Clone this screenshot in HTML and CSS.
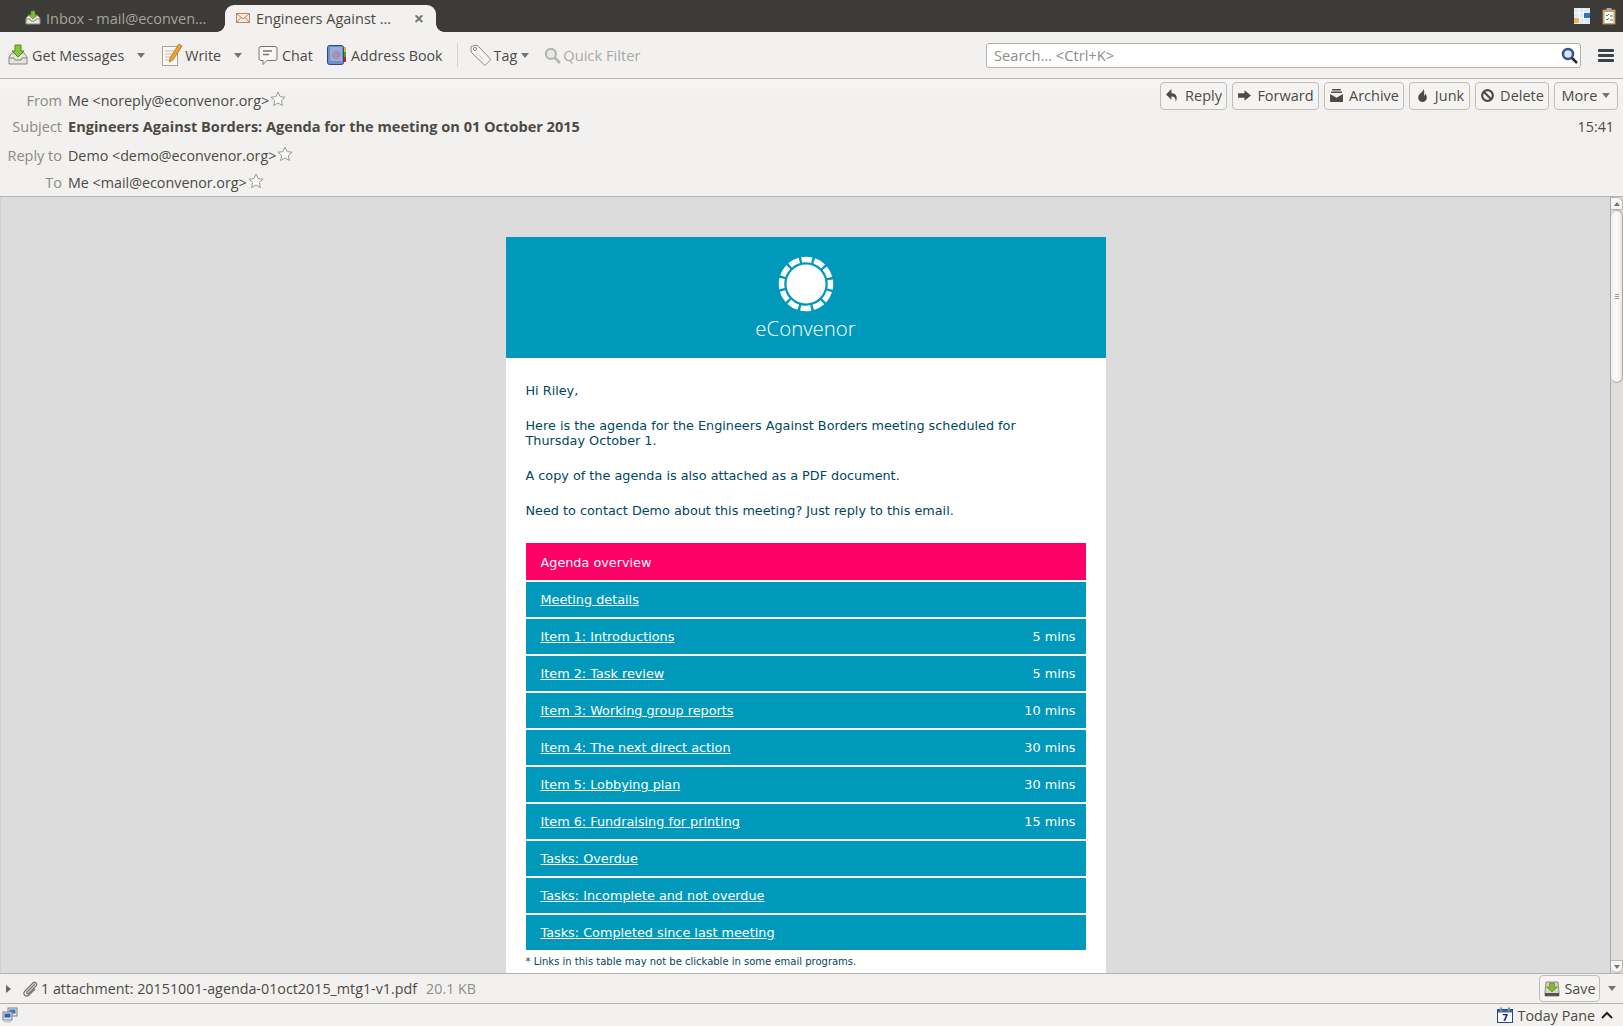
FILE: index.html
```html
<!DOCTYPE html>
<html lang="en">
<head>
    <meta charset="UTF-8">
    <title>Engineers Against Borders</title>
    <link rel="stylesheet" href="styles.css">
</head>
<body>
    <div class="tabbar">
        <div class="tab">
            <svg class="tab-icon" width="16" height="16" viewBox="0 0 16 16"><path d="M1 8l3-3h8l3 3v6H1z" fill="#e8e6df" stroke="#8a8a80"/><path d="M1 9h4l1 2h4l1-2h4" fill="none" stroke="#8a8a80"/><path d="M6 1h4v4h2.500L8 9 3.500 5H6z" fill="#7ebd35" stroke="#4e8a18" stroke-width=".7"/></svg>
            <span class="tab-title">Inbox - mail@econven…</span>
        </div>
        <div class="tab tab-active">
            <svg class="tab-icon" width="16" height="16" viewBox="0 0 16 16"><rect x="1.500" y="3.500" width="13" height="9" fill="#f3e9e0" stroke="#b98a68"/><path d="M1.500 3.500L8 9l6.500-5.500M1.500 12.500L6 7.500M14.500 12.500L10 7.500" fill="none" stroke="#b98a68"/></svg>
            <span class="tab-title">Engineers Against …</span>
            <span class="tab-close">×</span>
        </div>
        <div class="tabbar-icons">
            <svg width="16" height="16" viewBox="0 0 16 16"><rect width="16" height="16" fill="#dfe7f2"/><path d="M0 5h16M0 10h16M5 0v16M10 0v16" stroke="#fff"/><rect x="10" y="5" width="6" height="5" fill="#2f73c8"/><rect y="10" width="5" height="5" fill="#e8b45c"/></svg>
            <svg width="14" height="18" viewBox="0 0 14 18"><rect x=".5" y="2.500" width="13" height="15" rx="1" fill="#c9a36b" stroke="#7d5f33"/><rect x="2.500" y="5" width="9" height="11" fill="#fff"/><rect x="4.500" y="1" width="5" height="3" fill="#aaa"/><path d="M4 8l1 1 2-2M4 12l1 1 2-2" fill="none" stroke="#1f9a38"/><path d="M8 9h3M8 13h3" stroke="#666"/></svg>
        </div>
    </div>

    <div class="toolbar">
        <div class="tool tool-get">
            <svg width="20" height="22" viewBox="0 0 20 22"><path d="M1 13l3-4h12l3 4v7H1z" fill="#e6e4dc" stroke="#86867c"/><path d="M1 14h5l1 2h6l1-2h5" fill="none" stroke="#86867c"/><path d="M7 1h6v6h3l-6 6-6-6h3z" fill="#86c440" stroke="#4d8d1b"/></svg>
            <span>Get Messages</span>
            <span class="caret caret-wide"></span>
        </div>
        <div class="tool tool-write">
            <svg width="22" height="24" viewBox="0 0 22 24"><rect x="1.500" y="3.500" width="15" height="19" fill="#fbfaf5" stroke="#a5a297"/><path d="M4 8h10M4 11h8M4 14h7M4 17h5" stroke="#bdbab0"/><path d="M18 1l3 2-9 14-3.500 2 .5-4z" fill="#f0a030" stroke="#b06f14" stroke-width=".8"/></svg>
            <span>Write</span>
            <span class="caret caret-wide"></span>
        </div>
        <div class="tool tool-chat">
            <svg width="20" height="22" viewBox="0 0 20 22"><path d="M3 2.500h14a2 2 0 0 1 2 2v10a2 2 0 0 1-2 2H9l-4 4v-4H3a2 2 0 0 1-2-2v-10a2 2 0 0 1 2-2z" fill="#f8f7f3" stroke="#77766e"/><path d="M5 7h9M5 10.500h6" stroke="#77766e" stroke-width="1.300"/></svg>
            <span>Chat</span>
        </div>
        <div class="tool tool-book">
            <svg width="20" height="22" viewBox="0 0 20 22"><rect x=".5" y="1.500" width="16" height="19" rx="2" fill="#6f8fc6" stroke="#2f4a82"/><rect x="3" y="3" width="12" height="14" fill="#98aed8"/><text x="5" y="13" font-size="9" fill="#c05a7a" font-family="DejaVu Sans">@</text><rect x="17" y="3" width="2" height="5" fill="#c8c020"/><rect x="17" y="8" width="2" height="5" fill="#48a030"/><rect x="17" y="13" width="2" height="5" fill="#c02020"/></svg>
            <span>Address Book</span>
        </div>
        <div class="tool-sep"></div>
        <div class="tool tool-tag">
            <svg width="22" height="24" viewBox="0 0 22 24"><path d="M2 3.500l6-1.500 13 13.500c.6.6.6 1.400 0 2L17 21.500c-.6.6-1.400.6-2 0L2 9z" fill="#f6f5f1" stroke="#8d8c84"/><circle cx="6" cy="6" r="1.600" fill="none" stroke="#8d8c84"/><path d="M10 12l5 5" stroke="#cfcdc6"/></svg>
            <span>Tag</span>
            <span class="caret caret-tag"></span>
        </div>
        <div class="tool tool-filter">
            <svg width="17" height="17" viewBox="0 0 16 16"><circle cx="6.500" cy="6.500" r="4.700" fill="#e8e8e6" stroke="#b4b4b0" stroke-width="2"/><path d="M10 10l5 5" stroke="#b4b4b0" stroke-width="2.500"/></svg>
            <span>Quick Filter</span>
        </div>
        <div class="searchbox">
            <span>Search… &lt;Ctrl+K&gt;</span>
            <svg width="17" height="17" viewBox="0 0 17 17"><circle cx="7" cy="7" r="5" fill="#dbe6f7" stroke="#2f4f9a" stroke-width="2.500"/><path d="M11 11l5 5" stroke="#2a2a2a" stroke-width="2.500"/></svg>
        </div>
        <div class="hamburger"><i></i><i></i><i></i></div>
    </div>

    <div class="msg-header">
        <div class="msg-row msg-row-from">
            <span class="msg-label">From</span>
            <span class="msg-value">Me &lt;noreply@econvenor.org&gt;</span>
            <svg class="star" width="16" height="16" viewBox="0 0 16 16"><path d="M8 1l2.100 4.700 5 .5-3.800 3.300 1.100 5L8 12l-4.400 2.500 1.100-5L.9 6.200l5-.5z" fill="#fbfbf9" stroke="#9a9a92"/></svg>
            <div class="msg-actions">
                <button class="msg-btn btn-reply"><svg width="15" height="15" viewBox="0 0 14 14"><path d="M6 1L1 6l5 5V8c3 0 4 1.500 4 5 2-4 1-8-4-8z" fill="#4c4a45"/></svg>Reply</button>
                <button class="msg-btn btn-forward"><svg width="15" height="15" viewBox="0 0 14 14"><path d="M1 5h6V2l6 5-6 5V9H1z" fill="#4c4a45"/></svg>Forward</button>
                <button class="msg-btn btn-archive"><svg width="15" height="15" viewBox="0 0 14 14"><path d="M3 1h8v1.300H3zM2 3.300h10v1.300H2z" fill="#4c4a45"/><path d="M1 5.700l6 3.500 6-3.500V13H1z" fill="#4c4a45"/></svg>Archive</button>
                <button class="msg-btn btn-junk"><svg width="15" height="15" viewBox="0 0 14 14"><path d="M8 1c0 3-5 4-5 8a4 4 0 0 0 8 0c0-2-1-3-1.500-4 0 1.500-.5 2-1.200 2.500C8.500 5 9 3 8 1z" fill="#4c4a45"/></svg>Junk</button>
                <button class="msg-btn btn-delete"><svg width="15" height="15" viewBox="0 0 14 14"><circle cx="7" cy="7" r="5" fill="none" stroke="#4c4a45" stroke-width="2"/><path d="M3.500 3.500l7 7" stroke="#4c4a45" stroke-width="2"/></svg>Delete</button>
                <button class="msg-btn btn-more">More<span class="caret caret-more"></span></button>
            </div>
        </div>
        <div class="msg-row msg-row-subject">
            <span class="msg-label">Subject</span>
            <span class="msg-value msg-subject">Engineers Against Borders: Agenda for the meeting on 01 October 2015</span>
            <span class="msg-time">15:41</span>
        </div>
        <div class="msg-row msg-row-reply">
            <span class="msg-label">Reply to</span>
            <span class="msg-value">Demo &lt;demo@econvenor.org&gt;</span>
            <svg class="star" width="16" height="16" viewBox="0 0 16 16"><path d="M8 1l2.100 4.700 5 .5-3.800 3.300 1.100 5L8 12l-4.400 2.500 1.100-5L.9 6.200l5-.5z" fill="#fbfbf9" stroke="#9a9a92"/></svg>
        </div>
        <div class="msg-row msg-row-to">
            <span class="msg-label">To</span>
            <span class="msg-value">Me &lt;mail@econvenor.org&gt;</span>
            <svg class="star" width="16" height="16" viewBox="0 0 16 16"><path d="M8 1l2.100 4.700 5 .5-3.800 3.300 1.100 5L8 12l-4.400 2.500 1.100-5L.9 6.200l5-.5z" fill="#fbfbf9" stroke="#9a9a92"/></svg>
        </div>
    </div>

    <div class="pane">
        <div class="pane-scroll">
            <div class="email">
                <div class="email-head">
                    <svg width="56" height="56" viewBox="0 0 56 56">
                        <circle cx="28" cy="28" r="19.500" fill="#fff"/>
                        <circle cx="28" cy="28" r="24.500" fill="none" stroke="#fff" stroke-width="5.500" stroke-dasharray="10.500 2.330" stroke-dashoffset="5.250"/>
                    </svg>
                    <div class="email-brand">eConvenor</div>
                </div>
                <div class="email-body">
                    <p>Hi Riley,</p>
                    <p>Here is the agenda for the Engineers Against Borders meeting scheduled for Thursday October 1.</p>
                    <p>A copy of the agenda is also attached as a PDF document.</p>
                    <p>Need to contact Demo about this meeting? Just reply to this email.</p>
                    <div class="agenda">
                        <div class="agenda-row agenda-current"><span>Agenda overview</span></div>
                        <div class="agenda-row"><a href="#">Meeting details</a></div>
                        <div class="agenda-row"><a href="#">Item 1: Introductions</a><span>5 mins</span></div>
                        <div class="agenda-row"><a href="#">Item 2: Task review</a><span>5 mins</span></div>
                        <div class="agenda-row"><a href="#">Item 3: Working group reports</a><span>10 mins</span></div>
                        <div class="agenda-row"><a href="#">Item 4: The next direct action</a><span>30 mins</span></div>
                        <div class="agenda-row"><a href="#">Item 5: Lobbying plan</a><span>30 mins</span></div>
                        <div class="agenda-row"><a href="#">Item 6: Fundraising for printing</a><span>15 mins</span></div>
                        <div class="agenda-row"><a href="#">Tasks: Overdue</a></div>
                        <div class="agenda-row"><a href="#">Tasks: Incomplete and not overdue</a></div>
                        <div class="agenda-row"><a href="#">Tasks: Completed since last meeting</a></div>
                    </div>
                    <div class="agenda-note">* Links in this table may not be clickable in some email programs.</div>
                </div>
            </div>
        </div>
        <div class="scrollbar">
            <div class="scroll-btn scroll-up"></div>
            <div class="scroll-thumb"><i></i><i></i><i></i></div>
            <div class="scroll-rest"></div>
            <div class="scroll-btn scroll-down"></div>
        </div>
    </div>

    <div class="attachbar">
        <span class="twisty"></span>
        <svg class="clip" width="16" height="16" viewBox="0 0 16 16"><path d="M13 3L5 11c-1 1 .5 2.500 1.500 1.500L14 5c2-2-1-5-3-3L3 10c-3 3 1 7 4 4l6-6" fill="none" stroke="#77766e" stroke-width="1.200"/></svg>
        <span class="attach-name">1 attachment: 20151001-agenda-01oct2015_mtg1-v1.pdf</span>
        <span class="attach-size">20.1 KB</span>
        <button class="save-btn"><svg width="16" height="16" viewBox="0 0 16 16"><path d="M2 1h12l1 10v4H1v-4z" fill="#d8d6cc" stroke="#8f8e84"/><rect x="1" y="12" width="14" height="3" fill="#55554f"/><path d="M5.500 2h5v4h3L8 11 2.500 6h3z" fill="#86b83c" stroke="#5a8a1e" stroke-width=".7"/></svg>Save</button>
        <span class="caret caret-save"></span>
    </div>

    <div class="statusbar">
        <svg width="16" height="16" viewBox="0 0 16 16"><rect x="6" y="1" width="9" height="8" fill="#dfe3ea" stroke="#7d8088"/><rect x="7.500" y="2.500" width="6" height="4" fill="#3f74c4"/><rect x="1" y="5" width="9" height="8" fill="#dfe3ea" stroke="#7d8088"/><rect x="2.500" y="6.500" width="6" height="4" fill="#2f62b4"/><rect x="2" y="13.500" width="7" height="2" fill="#c9c9c4"/></svg>
        <div class="today">
            <svg width="16" height="16" viewBox="0 0 16 16"><rect x=".5" y="2.500" width="15" height="13" fill="#fff" stroke="#24488c"/><rect x="1" y="3" width="14" height="2.500" fill="#3568b8"/><path d="M4 .5v4M12 .5v4" stroke="#8a8a86" stroke-width="2"/><text x="5" y="14" font-size="9" font-weight="bold" fill="#1a1a90" font-family="DejaVu Sans">7</text></svg>
            <span>Today Pane</span>
            <svg width="12" height="8" viewBox="0 0 12 8"><path d="M1 7l5-5 5 5" fill="none" stroke="#222" stroke-width="2"/></svg>
        </div>
    </div>
</body>
</html>
```

FILE: styles.css
```css
* {
    box-sizing: border-box;
}

html, body {
    height: 100%;
}

body {
    margin: 0;
    display: flex;
    flex-direction: column;
    height: 100vh;
    overflow: hidden;
    background-color: #f2f1f0;
    color: #4c4a45;
    font-family: 'Open Sans', 'Noto Sans', sans-serif;
    font-size: 14.3px;
}

svg {
    flex: none;
    display: block;
}

.caret {
    display: inline-block;
    width: 0;
    height: 0;
    margin-left: 4px;
    border-left: 4px solid transparent;
    border-right: 4px solid transparent;
    border-top: 5px solid #77766e;
}

.caret-wide {
    margin-left: 9px;
}

.caret-tag {
    margin-left: 1px;
}

.caret-more {
    margin-left: 5px;
}

/* tabs */
.tabbar {
    display: flex;
    align-items: flex-end;
    height: 32px;
    flex: none;
    padding-left: 25px;
    background-color: #3c3b37;
}

.tab {
    display: flex;
    align-items: center;
    width: 200px;
    height: 27px;
    padding-bottom: 1px;
    font-size: 14.500px;
    color: #a5a49e;
}

.tab-title {
    margin-left: 5px;
    white-space: nowrap;
}

.tab-active {
    position: relative;
    width: 211px;
    padding: 0 12px 1px 10px;
    background-color: #f2f1f0;
    border-radius: 9px 9px 0 0;
    color: #4c4a45;
}

/* flared foot of the active tab */
.tab-active::before,
.tab-active::after {
    content: "";
    position: absolute;
    bottom: 0;
    width: 8px;
    height: 8px;
}

.tab-active::before {
    left: -8px;
    background: radial-gradient(circle at 0 0, #3c3b37 7.500px, #f2f1f0 8px);
}

.tab-active::after {
    right: -8px;
    background: radial-gradient(circle at 100% 0, #3c3b37 7.500px, #f2f1f0 8px);
}

.tab-close {
    margin-left: auto;
    font-size: 18px;
    font-weight: 700;
    line-height: 1;
    color: #77766e;
}

.tabbar-icons {
    display: flex;
    align-items: center;
    gap: 12px;
    height: 32px;
    margin-left: auto;
    padding-right: 7px;
}

/* main toolbar */
.toolbar {
    display: flex;
    align-items: center;
    height: 47px;
    flex: none;
    padding-left: 8px;
    border-bottom: 1px solid #b6b4af;
}

.tool {
    display: flex;
    align-items: center;
    gap: 4px;
    white-space: nowrap;
}

.tool-write {
    gap: 2px;
    margin-left: 16px;
}

.tool-write .caret {
    margin-left: 11px;
}

.tool-chat {
    gap: 4px;
    margin-left: 16px;
}

.tool-book {
    margin-left: 14px;
}

.tool-sep {
    width: 1px;
    height: 24px;
    margin: 0 11px 0 14px;
    background-color: #d6d4cf;
}

.tool-tag {
    gap: 3px;
}

.tool-filter {
    gap: 2px;
    margin-left: 15px;
    font-size: 14.700px;
    color: #aaa9a4;
}

.searchbox {
    display: flex;
    align-items: center;
    justify-content: space-between;
    width: 595px;
    height: 25px;
    margin-left: auto;
    padding: 0 2px 0 7px;
    background-color: #fff;
    border: 1px solid #b3b1ac;
    border-radius: 3px;
    font-size: 14.700px;
    color: #8f8e89;
}

.hamburger {
    display: flex;
    flex-direction: column;
    gap: 2px;
    width: 16px;
    margin: 0 9px 0 17px;
}

.hamburger i {
    display: block;
    height: 3px;
    background-color: #3c4048;
    border-radius: 1px;
}

/* message header */
.msg-header {
    flex: none;
    height: 118px;
    padding-top: 6px;
    background: linear-gradient(#f7f6f5, #f2f1f0 20px);
    border-bottom: 1px solid #b6b4af;
}

.msg-row {
    display: flex;
    align-items: center;
}

.msg-row-from {
    height: 31px;
}

.msg-row-subject {
    height: 22px;
    padding-bottom: 2px;
}

.msg-row-reply {
    height: 35px;
}

.msg-row-to {
    height: 19px;
}

.msg-label {
    width: 62px;
    flex: none;
    margin-right: 6px;
    text-align: right;
    white-space: nowrap;
    font-size: 14.500px;
    color: #8b8a85;
}

.msg-value {
    white-space: nowrap;
}

.msg-subject {
    font-size: 14.550px;
    font-weight: 700;
}

.star {
    margin: -3px 0 0 1px;
}

.msg-time {
    margin-left: auto;
    padding-right: 9px;
}

.msg-actions {
    display: flex;
    gap: 5px;
    height: 28px;
    margin: -10px 5px 0 auto;
}

.msg-btn, .save-btn {
    display: flex;
    align-items: center;
    justify-content: center;
    gap: 5px;
    padding: 0;
    background-color: #f5f4f3;
    border: 1px solid #c0bebb;
    border-radius: 4px;
    color: #4c4a45;
    font: inherit;
}

.msg-btn {
    font-size: 14.500px;
}

.btn-reply { width: 67px; }
.btn-forward { width: 87px; }
.btn-archive { width: 80px; }
.btn-junk { width: 61px; }
.btn-delete { width: 74px; }
.btn-more { width: 64px; gap: 0; }

/* message pane */
.pane {
    display: flex;
    flex: 1;
    min-height: 0;
    background-color: #dcdcdc;
    border-left: 1px solid #d0cfcb;
}

.pane-scroll {
    flex: 1;
    min-width: 0;
    overflow: hidden;
}

.email {
    width: 600px;
    margin: 40px auto 0;
    background-color: #fff;
    color: #00475f;
    font-family: 'DejaVu Sans', sans-serif;
    font-size: 12.800px;
    line-height: 15px;
}

.email-head {
    display: flex;
    flex-direction: column;
    align-items: center;
    height: 121px;
    padding-top: 19px;
    background-color: #0099bc;
    color: #fff;
}

.email-brand {
    margin-top: 2px;
    font-family: 'Open Sans', sans-serif;
    font-size: 20.400px;
    font-weight: 300;
    line-height: 28px;
}

.email-body {
    padding: 25px 20px 40px;
}

.email-body p {
    max-width: 520px;
    margin: 0 0 20px;
}

.agenda {
    display: flex;
    flex-direction: column;
    gap: 2px;
    margin-top: 25px;
}

.agenda-row {
    display: flex;
    align-items: center;
    justify-content: space-between;
    height: 35px;
    padding: 0 10px 0 15px;
    background-color: #0099bc;
    color: #fff;
}

.agenda-row a {
    color: #fff;
}

.agenda-current {
    height: 37px;
    padding-top: 1px;
    background-color: #ff0066;
}

.agenda-note {
    margin-top: 5px;
    font-size: 10px;
    line-height: 13px;
}

/* scrollbar */
.scrollbar {
    display: flex;
    flex-direction: column;
    flex: none;
    width: 13px;
    background-color: #e0dfdc;
    border-left: 1px solid #a8a7a3;
}

.scroll-btn {
    position: relative;
    height: 13px;
    flex: none;
    background-color: #f7f6f5;
    border: 1px solid #b5b4b0;
    border-left: none;
}

.scroll-up {
    border-radius: 0 6px 0 0;
}

.scroll-down {
    border-radius: 0 0 6px 6px;
}

.scroll-btn::after {
    content: "";
    position: absolute;
    left: 3px;
    top: 4px;
    border-left: 3px solid transparent;
    border-right: 3px solid transparent;
}

.scroll-up::after {
    border-bottom: 4px solid #77766e;
}

.scroll-down::after {
    border-top: 4px solid #77766e;
}

.scroll-thumb {
    display: flex;
    flex-direction: column;
    align-items: center;
    justify-content: center;
    gap: 1px;
    height: 173px;
    flex: none;
    background: linear-gradient(90deg, #f0efed, #fbfbfa 50%, #e8e7e4);
    border: 1px solid #a8a7a3;
    border-left: none;
    border-radius: 6px;
}

.scroll-thumb i {
    display: block;
    width: 4px;
    height: 1px;
    background-color: #9b9a96;
}

.scroll-rest {
    flex: 1;
}

/* attachment and status bars */
.attachbar {
    display: flex;
    align-items: center;
    height: 30px;
    flex: none;
    padding-left: 6px;
    border-top: 1px solid #b6b4af;
}

.twisty {
    width: 0;
    height: 0;
    border-top: 4px solid transparent;
    border-bottom: 4px solid transparent;
    border-left: 5px solid #66655f;
}

.clip {
    margin-left: 11px;
}

.attach-name {
    margin-left: 3px;
    white-space: nowrap;
}

.attach-size {
    margin-left: 9px;
    color: #8f8e89;
}

.save-btn {
    width: 61px;
    height: 27px;
    margin-left: auto;
}

.caret-save {
    margin: 0 7px 0 8px;
}

.statusbar {
    display: flex;
    align-items: center;
    justify-content: space-between;
    height: 23px;
    flex: none;
    padding: 0 10px 0 2px;
    border-top: 1px solid #b6b4af;
}

.today {
    display: flex;
    align-items: center;
    gap: 5px;
}

.today svg:last-child {
    margin-left: 1px;
}
```
